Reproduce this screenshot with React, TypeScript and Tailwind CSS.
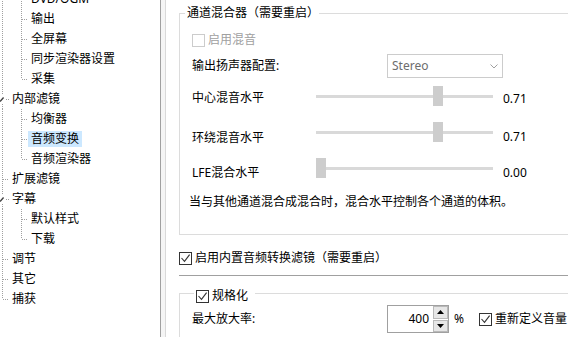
import React from "react";

type TreeRow = {
  label: string;
  level: 0 | 1;
  root: "full" | "half";
  child?: "full" | "half";
  expanded?: boolean;
  selected?: boolean;
};

const treeRows: TreeRow[] = [
  { label: "DVD/OGM", level: 1, root: "full", child: "full" },
  { label: "输出", level: 1, root: "full", child: "full" },
  { label: "全屏幕", level: 1, root: "full", child: "full" },
  { label: "同步渲染器设置", level: 1, root: "full", child: "full" },
  { label: "采集", level: 1, root: "full", child: "half" },
  { label: "内部滤镜", level: 0, root: "full", expanded: true },
  { label: "均衡器", level: 1, root: "full", child: "full" },
  { label: "音频变换", level: 1, root: "full", child: "full", selected: true },
  { label: "音频渲染器", level: 1, root: "full", child: "half" },
  { label: "扩展滤镜", level: 0, root: "full" },
  { label: "字幕", level: 0, root: "full", expanded: true },
  { label: "默认样式", level: 1, root: "full", child: "full" },
  { label: "下载", level: 1, root: "full", child: "half" },
  { label: "调节", level: 0, root: "full" },
  { label: "其它", level: 0, root: "full" },
  { label: "捕获", level: 0, root: "half" },
];

const dot = { stroke: "#a0a0a0", strokeWidth: 1, strokeDasharray: "1 1", fill: "none" };

function TreeLines({ row }: { row: TreeRow }) {
  const w = row.level === 0 ? 9 : 28;
  return (
    <svg width={w} height={20} className="shrink-0">
      {row.expanded ? (
        <>
          <path d="M2.5 0 V5" {...dot} />
          <path d="M2.5 15 V20" {...dot} />
          <path d="M0 12.5 L3.6 8.5" stroke="#404040" strokeWidth="1.4" fill="none" />
          <path d="M6 10.5 H9" {...dot} />
        </>
      ) : (
        <path d={row.root === "full" ? "M2.5 0 V20" : "M2.5 0 V10"} {...dot} />
      )}
      {row.level === 0 && !row.expanded && <path d="M3 10.5 H9" {...dot} />}
      {row.level === 1 && (
        <>
          <path d={row.child === "full" ? "M21.5 0 V20" : "M21.5 0 V10"} {...dot} />
          <path d="M22 10.5 H28" {...dot} />
        </>
      )}
    </svg>
  );
}

function CheckBox({ checked, disabled }: { checked?: boolean; disabled?: boolean }) {
  return (
    <span
      className={`w-[13px] h-[13px] shrink-0 border bg-white flex items-start justify-start ${
        disabled ? "border-[#cccccc]" : "border-[#333333]"
      }`}
    >
      {checked && (
        <svg width={11} height={11} viewBox="0 0 11 11">
          <path d="M1.5 5 L4.5 8.3 L9.6 1.6" stroke="#333333" strokeWidth="1.1" fill="none" />
        </svg>
      )}
    </span>
  );
}

function Slider({ value }: { value: number }) {
  return (
    <div className="relative w-[177px] h-[20px] shrink-0">
      <div className="absolute left-0 right-0 top-[9px] h-[3px] bg-[#d9d9d9]" />
      <div
        className="absolute top-0 w-[10px] h-[20px] bg-[#cdcdcd]"
        style={{ left: Math.round(value * 167) }}
      />
    </div>
  );
}

function SliderRow({
  label,
  value,
  text,
  mt,
  labelMt,
  valueMt,
}: {
  label: string;
  value: number;
  text: string;
  mt: string;
  labelMt: string;
  valueMt: string;
}) {
  return (
    <div className={`flex items-start h-[20px] ${mt}`}>
      <span className={`w-[124px] shrink-0 leading-4 ${labelMt}`}>{label}</span>
      <Slider value={value} />
      <span className={`ml-[10px] leading-4 ${valueMt}`}>{text}</span>
    </div>
  );
}

export default function App() {
  return (
    <div className="w-[568px] h-[337px] overflow-hidden bg-white flex text-[12px] text-black font-['Noto_Sans','Noto_Sans_CJK_SC',sans-serif]">
      {/* tree */}
      <div className="w-[161px] shrink-0 border-r border-[#a0a0a0]">
        <div className="flex flex-col mt-[-11px]">
          {treeRows.map((row, i) => (
            <div key={i} className="h-5 flex items-center whitespace-nowrap">
              <TreeLines row={row} />
              <span className={`px-[3px] leading-4 ${row.selected ? "bg-[#cce8ff]" : ""}`}>
                {row.label}
              </span>
            </div>
          ))}
        </div>
      </div>
      <div className="w-[4px] shrink-0 bg-[#f5f5f5]" />

      {/* settings */}
      <div className="flex-1 border-l border-[#d9d9d9] pl-[13px] overflow-hidden">
        <fieldset className="mt-[5px] w-[420px] border border-[#dcdcdc]">
          <legend className="ml-[5px] pl-[2px] leading-4">通道混合器（需要重启）</legend>
          <div className="flex flex-col pl-[12px] pb-[24px]">
            <div className="mt-[9px] h-[20px] flex items-center gap-[3px]">
              <CheckBox disabled />
              <span className="leading-4 text-[#a0a0a0]">启用混音</span>
            </div>
            <div className="mt-[4px] h-[24px] flex items-center">
              <span className="w-[195px] shrink-0 leading-4">输出扬声器配置:</span>
              <div className="w-[116px] h-[24px] border border-[#cccccc] flex items-center pl-[4px] text-[#6d6d6d]">
                <span className="leading-4">Stereo</span>
                <svg width={8} height={5} className="ml-auto mr-[4px]">
                  <path d="M0.5 0.5 L4 4 L7.5 0.5" stroke="#a0a0a0" fill="none" />
                </svg>
              </div>
            </div>
            <SliderRow label="中心混音水平" value={0.7} text="0.71" mt="mt-[8px]" labelMt="mt-[4px]" valueMt="mt-[5px]" />
            <SliderRow label="环绕混音水平" value={0.7} text="0.71" mt="mt-[16px]" labelMt="mt-[8px]" valueMt="mt-[7px]" />
            <SliderRow label="LFE混合水平" value={0} text="0.00" mt="mt-[16px]" labelMt="mt-[7px]" valueMt="mt-[7px]" />
            <p className="mt-[16px] -ml-[3px] leading-4 whitespace-nowrap">
              当与其他通道混合成混合时，混合水平控制各个通道的体积。
            </p>
          </div>
        </fieldset>

        <div className="mt-[15px] h-4 flex items-center gap-[3px] whitespace-nowrap">
          <CheckBox checked />
          <span className="leading-4">启用内置音频转换滤镜（需要重启）</span>
        </div>

        <div className="mt-[9px] w-[420px] h-px bg-[#a0a0a0]" />

        <fieldset className="mt-[6px] w-[420px] h-[90px] border border-[#dcdcdc]">
          <legend className="ml-[14px] pl-[2px] pr-[7px] pt-[6px]">
            <div className="h-4 flex items-center gap-[3px]">
              <CheckBox checked />
              <span className="leading-4">规格化</span>
            </div>
          </legend>
          <div className="mt-[1px] pl-[12px] h-[28px] flex items-center whitespace-nowrap">
            <span className="w-[195px] shrink-0 leading-4">最大放大率:</span>
            <div className="w-[62px] h-[28px] shrink-0 border border-[#a0a0a0] flex">
              <div className="flex-1 flex items-center justify-end pr-[4px] leading-4">400</div>
              <div className="w-[15px] flex flex-col gap-[1px]">
                <div className="flex-1 bg-[#e6e6e6] border border-[#b9b9b9] flex items-center justify-center">
                  <svg width={7} height={4}>
                    <path d="M0 4 L3.5 0 L7 4 Z" fill="#000" />
                  </svg>
                </div>
                <div className="flex-1 bg-[#e6e6e6] border border-[#b9b9b9] flex items-center justify-center">
                  <svg width={7} height={4}>
                    <path d="M0 0 L3.5 4 L7 0 Z" fill="#000" />
                  </svg>
                </div>
              </div>
            </div>
            <span className="ml-[5px] leading-4">%</span>
            <div className="ml-[15px] flex items-center gap-[3px]">
              <CheckBox checked />
              <span className="leading-4">重新定义音量</span>
            </div>
          </div>
        </fieldset>
      </div>
    </div>
  );
}
